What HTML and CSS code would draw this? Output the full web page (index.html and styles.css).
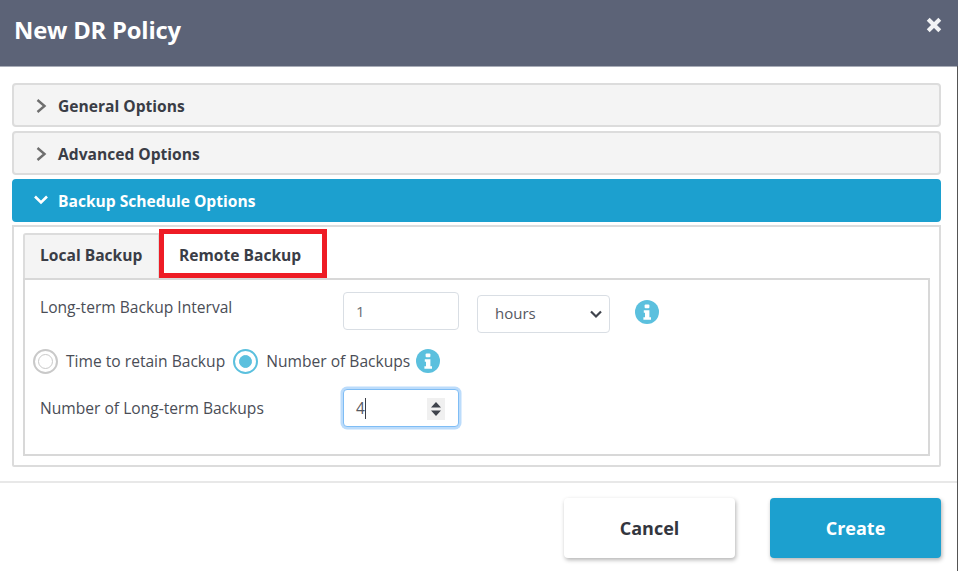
FILE: index.html
```html
<!DOCTYPE html>
<html lang="en">
<head>
<meta charset="utf-8">
<title>New DR Policy</title>
<link rel="stylesheet" href="styles.css">
</head>
<body>
<div class="modal">
  <header class="modal-head">
    <h1 class="title">New DR Policy</h1>
    <svg class="close" viewBox="0 0 14 14" aria-hidden="true"><path d="M2.5 2.5 11.5 11.5M11.5 2.5 2.5 11.5"/></svg>
  </header>
  <div class="modal-body">
    <div class="acc">
      <svg class="chev" viewBox="0 0 12 16"><path d="M2.5 2 9.5 8 2.5 14"/></svg>
      <span>General Options</span>
    </div>
    <div class="acc">
      <svg class="chev" viewBox="0 0 12 16"><path d="M2.5 2 9.5 8 2.5 14"/></svg>
      <span>Advanced Options</span>
    </div>
    <div class="acc acc-open">
      <svg class="chev-down" viewBox="0 0 16 12"><path d="M2 2.5 8 8.5 14 2.5"/></svg>
      <span>Backup Schedule Options</span>
    </div>
    <section class="acc-body">
      <div class="tabs">
        <div class="tab tab-local">Local Backup</div>
        <div class="tab tab-remote">Remote Backup
          <div class="highlight"></div>
        </div>
      </div>
      <div class="pane">
        <div class="row row-interval">
          <label class="label">Long-term Backup Interval</label>
          <div class="input input-one">1</div>
          <div class="select">
            <span>hours</span>
            <svg class="select-arrow" viewBox="0 0 14 10"><path d="M2 2.5 7 7.5 12 2.5"/></svg>
          </div>
          <svg class="info info-a" viewBox="0 0 24 24"><circle cx="12" cy="12" r="12"/><rect class="i" x="9.6" y="4.5" width="4.8" height="3.8" rx="1"/><path class="i" d="M8.8 10.2h5.6v7h1.6v2.5H8.4v-2.5h1.6v-4.5H8.8z"/></svg>
        </div>
        <div class="row row-radio">
          <span class="radio"><span class="dot"></span></span>
          <span class="radio-label radio-label-a">Time to retain Backup</span>
          <span class="radio radio-on"><span class="dot"></span></span>
          <span class="radio-label radio-label-b">Number of Backups</span>
          <svg class="info info-b" viewBox="0 0 24 24"><circle cx="12" cy="12" r="12"/><rect class="i" x="9.6" y="4.5" width="4.8" height="3.8" rx="1"/><path class="i" d="M8.8 10.2h5.6v7h1.6v2.5H8.4v-2.5h1.6v-4.5H8.8z"/></svg>
        </div>
        <div class="row row-count">
          <label class="label">Number of Long-term Backups</label>
          <div class="input input-focus">
            <span class="value">4</span><span class="caret"></span>
            <svg class="spin" viewBox="0 0 18 22"><rect width="18" height="22"/><path d="M9 4 14 9.5H4zM9 18 4 12.5H14z"/></svg>
          </div>
        </div>
      </div>
    </section>
  </div>
  <footer class="modal-foot">
    <button class="btn btn-cancel">Cancel</button>
    <button class="btn btn-create">Create</button>
  </footer>
</div>
</body>
</html>
```
FILE: styles.css
```css
* { box-sizing: border-box; }
html, body { margin: 0; padding: 0; background: #fff; }
body { width: 958px; height: 571px; overflow: hidden; font-family: "Open Sans", "Liberation Sans", sans-serif; color: #3a3d46; }
.modal { width: 958px; height: 571px; display: flex; flex-direction: column; border-right: 2px solid #fff; position: relative; }
.modal::after { content: ""; position: absolute; right: -2px; top: 66px; bottom: 0; width: 1px; background: #555; }
.modal-head { height: 67px; flex: none; background: #5c6377; border-bottom: 1px solid #a9adb8; margin-right: -2px; display: flex; align-items: center; justify-content: space-between; padding: 0 17px 6px 14px; }
.title { margin: 0; font-size: 23.8px; font-weight: 700; color: #fff; line-height: 32px; letter-spacing: -0.2px; }
.close { width: 18px; height: 18px; margin-top: -10px; margin-right: -2px; }
.close path { fill: none; stroke: #f2f3f5; stroke-width: 3.2; }
.modal-body { flex: none; height: 416px; padding: 16px 17px 0 12px; border-bottom: 2px solid #e8e8e8; margin-right: -2px; }
.acc { height: 44px; margin-bottom: 4px; padding-top: 1px; display: flex; align-items: center; background: #f4f4f4; border: 2px solid #dcdcdc; border-radius: 4px; padding-left: 21px; font-size: 15.6px; font-weight: 700; color: #3a3d46; }
.acc span { margin-left: 11px; }
.chev { width: 12px; height: 16px; flex: none; }
.chev path { fill: none; stroke: #6e6e6e; stroke-width: 2.4; }
.acc-open { height: 43px; margin-bottom: 3px; padding-top: 0; background: #1ca0cf; border-color: #1ca0cf; color: #fff; padding-left: 19px; }
.acc-open span { margin-left: 9px; }
.chev-down { width: 16px; height: 12px; flex: none; margin-top: -2px; }
.chev-down path { fill: none; stroke: #fff; stroke-width: 2.6; }
.acc-body { height: 242px; border: 2px solid #dcdcdc; border-radius: 0 0 2px 2px; padding: 6px 9px 9px 9px; }
.tabs { display: flex; height: 45px; }
.tab { height: 45px; font-size: 15.6px; font-weight: 700; display: flex; align-items: center; color: #3a3d46; }
.tab-local { width: 137px; background: #f4f4f4; border: 2px solid #dcdcdc; border-bottom: 0; border-radius: 3px 0 0 0; padding: 0 0 4px 15px; }
.tab-remote { width: 160px; position: relative; padding-left: 19px; background: #fff; border-bottom: 2px solid #1ca0cf; }
.highlight { position: absolute; left: -1px; top: -4px; width: 168px; height: 49px; border: 5px solid #ee1c25; }
.pane { height: 178px; border: 2px solid #d8d8d8; padding: 0 15px; position: relative; }
.row { display: flex; align-items: center; }
.label { font-size: 15.6px; color: #4a4d56; width: 303px; flex: none; }
.row-interval { height: 61px; padding-top: 2px; }
.row-interval .label { margin-top: -10px; }
.input { width: 116px; height: 38px; flex: none; background: #fff; border: 1.5px solid #d9dee4; border-radius: 4px; font-size: 15px; color: #6a6d74; padding-left: 12px; display: flex; align-items: center; position: relative; }
.input-one { margin-top: -2px; }
.select { width: 133px; height: 38px; flex: none; margin-left: 18px; margin-top: 5px; border: 1.5px solid #d9dee4; border-radius: 4px; padding: 0 6px 2px 17px; display: flex; align-items: center; justify-content: space-between; font-size: 15px; color: #555862; }
.select-arrow { width: 14px; height: 10px; margin-top: 2px; }
.select-arrow path { fill: none; stroke: #3f434c; stroke-width: 2.2; }
.info { width: 24px; height: 24px; flex: none; }
.info circle { fill: #5bc0de; }
.info .i { fill: #fff; }
.info-a { margin-left: 25px; }
.row-radio { height: 36px; margin-left: -7px; margin-top: 2px; }
.radio { width: 25px; height: 25px; flex: none; border-radius: 50%; border: 2px solid #c9c9c9; display: flex; align-items: center; justify-content: center; }
.dot { width: 15px; height: 15px; border-radius: 50%; border: 1.5px solid #c9c9c9; background: #fff; }
.radio-on { border: 2.5px solid #5bc0de; margin-left: 8px; }
.radio-on .dot { background: #5bc0de; border-color: #5bc0de; width: 13px; height: 13px; }
.radio-label { font-size: 15.6px; color: #4a4d56; margin-left: 8px; }
.info-b { margin-left: 6px; }
.row-count { height: 38px; margin-top: 10px; }
.input-focus { border: 1.5px solid #7fbdf5; box-shadow: 0 0 0 2.5px #bcdcfb; height: 38px; font-size: 15.5px; color: #555862; }
.caret { width: 1px; height: 21px; background: #3a3d46; }
.spin { position: absolute; right: 13px; top: 8px; width: 18px; height: 22px; }
.spin rect { fill: #f0f0f0; }
.spin path { fill: #3f434c; }
.modal-foot { flex: 1; display: flex; justify-content: flex-end; gap: 35px; padding: 15px 17px 13px 0; margin-right: -2px; }
.btn { width: 171px; height: 60px; border: 0; border-radius: 4px; font-family: inherit; font-size: 18px; font-weight: 700; box-shadow: 1px 2px 4px rgba(0,0,0,.3); }
.btn-cancel { background: #fff; color: #33363e; }
.btn-create { background: #1ca0cf; color: #fff; }
```
